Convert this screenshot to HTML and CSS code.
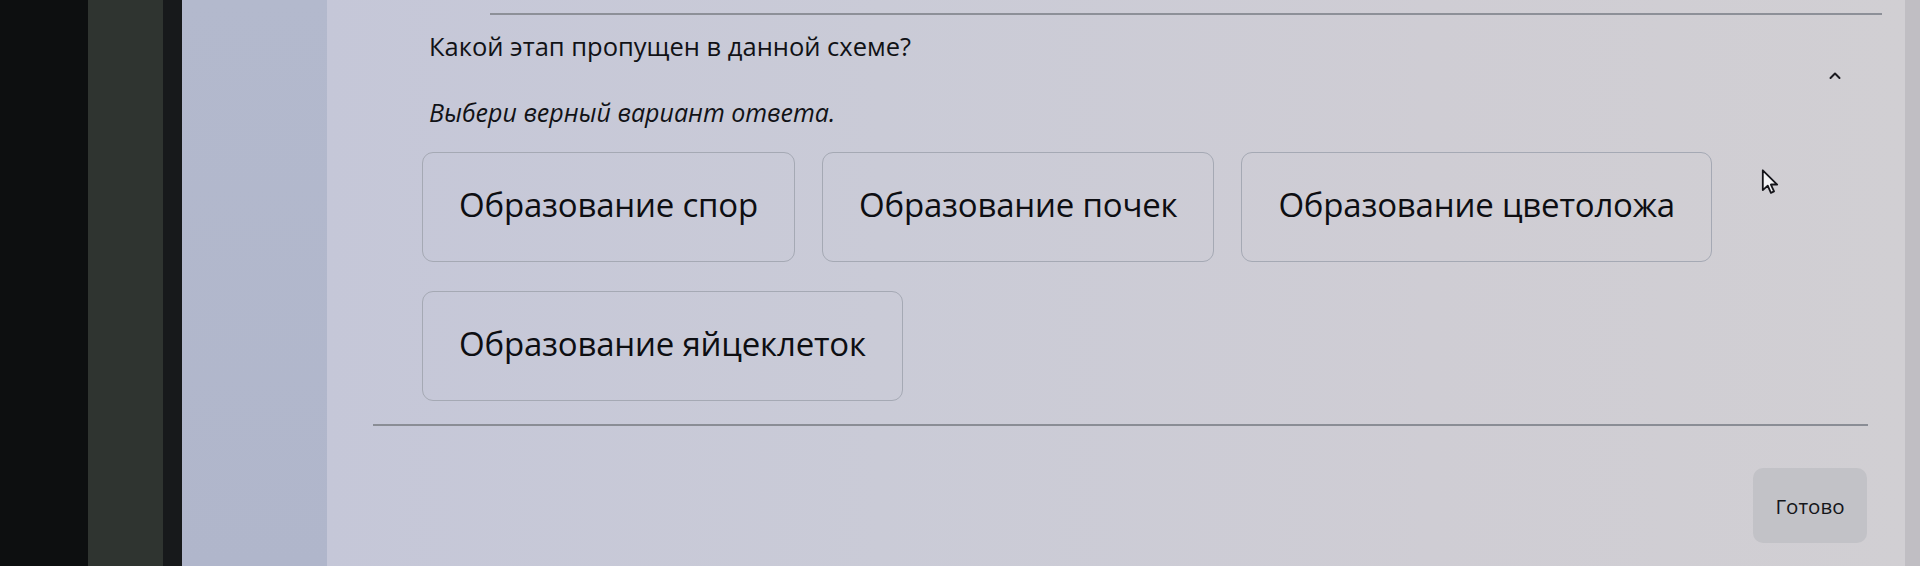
FILE: index.html
```html
<!DOCTYPE html>
<html lang="ru">
<head>
<meta charset="utf-8">
<title>Вопрос</title>
<link rel="stylesheet" href="styles.css">
</head>
<body>
<div class="screen">
  <div class="bezel"></div>
  <div class="bezel-mid"></div>
  <div class="bezel-edge"></div>
  <aside class="sidebar"></aside>
  <main class="main">
    <div class="topline"></div>
    <section class="task">
      <div class="qhead">
        <div class="qtext">
          <p class="question">Какой этап пропущен в данной схеме?</p>
          <p class="instruction">Выбери верный вариант ответа.</p>
        </div>
        <button class="collapse" type="button" aria-label="Свернуть">
          <svg width="14" height="9" viewBox="0 0 14 9"><polyline points="2.5,7 7,2.5 11.5,7" fill="none" stroke="#1b1b20" stroke-width="2" stroke-linecap="round" stroke-linejoin="round"/></svg>
        </button>
      </div>
      <div class="options">
        <button class="option" type="button">Образование спор</button>
        <button class="option" type="button">Образование почек</button>
        <button class="option" type="button">Образование цветоложа</button>
        <button class="option" type="button">Образование яйцеклеток</button>
      </div>
    </section>
    <div class="separator"></div>
    <div class="footer">
      <button class="done" type="button">Готово</button>
    </div>
    <svg class="cursor" width="18" height="28" viewBox="0 0 20 30"><path d="M2 2 L2 24 L7.5 19 L11 27 L14.5 25.5 L11 17.8 L18 17.8 Z" fill="#f4f4f6" stroke="#15151a" stroke-width="2" stroke-linejoin="round"/></svg>
  </main>
  <div class="right-strip"></div>
</div>
</body>
</html>
```

FILE: styles.css
```css
* { box-sizing: border-box; }

html, body {
  margin: 0;
  padding: 0;
  width: 1920px;
  height: 566px;
  overflow: hidden;
  background: #0c0e0f;
}

.screen {
  display: flex;
  width: 1920px;
  height: 566px;
}

.bezel {
  width: 88px;
  background: #0d0f10;
}

.bezel-mid {
  width: 75px;
  background: #2f3430;
}

.bezel-edge {
  width: 19px;
  background: #17191b;
}

.sidebar {
  width: 145px;
  background: linear-gradient(180deg, #b3b9cd 0%, #b0b6cb 100%);
}

.main {
  position: relative;
  flex: 1;
  display: flex;
  flex-direction: column;
  background: linear-gradient(90deg, #c5c7d8 0%, #cacbd7 35%, #cfcdd4 70%, #d1cfd3 100%);
  font-family: "Open Sans", "Noto Sans", sans-serif;
  color: #111216;
}

.topline {
  height: 2px;
  margin: 13px 23px 0 163px;
  background: #8d9098;
}

.task {
  padding-left: 95px;
  padding-right: 63px;
}

.qhead {
  display: flex;
  justify-content: space-between;
  align-items: flex-start;
  margin-top: 14px;
  padding-left: 7px;
}

.question {
  margin: 0;
  font-size: 25.5px;
  line-height: 34px;
}

.instruction {
  margin: 33px 0 0;
  font-size: 25px;
  line-height: 32px;
  font-style: italic;
}

.collapse {
  margin-top: 42px;
  padding: 0;
  border: 0;
  background: none;
  width: 14px;
  height: 9px;
  display: flex;
}

.options {
  display: flex;
  flex-wrap: wrap;
  gap: 29px 27px;
  width: 1330px;
  margin-top: 24px;
}

.option {
  height: 110px;
  padding: 0 36px 6px;
  border: 1.5px solid #a5a9b4;
  border-radius: 11px;
  background: transparent;
  font-family: "Open Sans", "Noto Sans", sans-serif;
  font-size: 33px;
  letter-spacing: -0.2px;
  color: #0d0e12;
  display: flex;
  align-items: center;
}

.separator {
  height: 2px;
  margin: 23px 37px 0 46px;
  background: #8a8d95;
}

.footer {
  display: flex;
  justify-content: flex-end;
  padding-right: 38px;
  margin-top: 42px;
}

.done {
  width: 114px;
  height: 75px;
  border: 0;
  border-radius: 10px;
  background: #c2c2c7;
  font-family: "Open Sans", "Noto Sans", sans-serif;
  font-size: 20.5px;
  color: #15161a;
}

.cursor {
  position: absolute;
  left: 1434px;
  top: 168px;
}

.right-strip {
  width: 15px;
  background: #c0bec3;
}
```
